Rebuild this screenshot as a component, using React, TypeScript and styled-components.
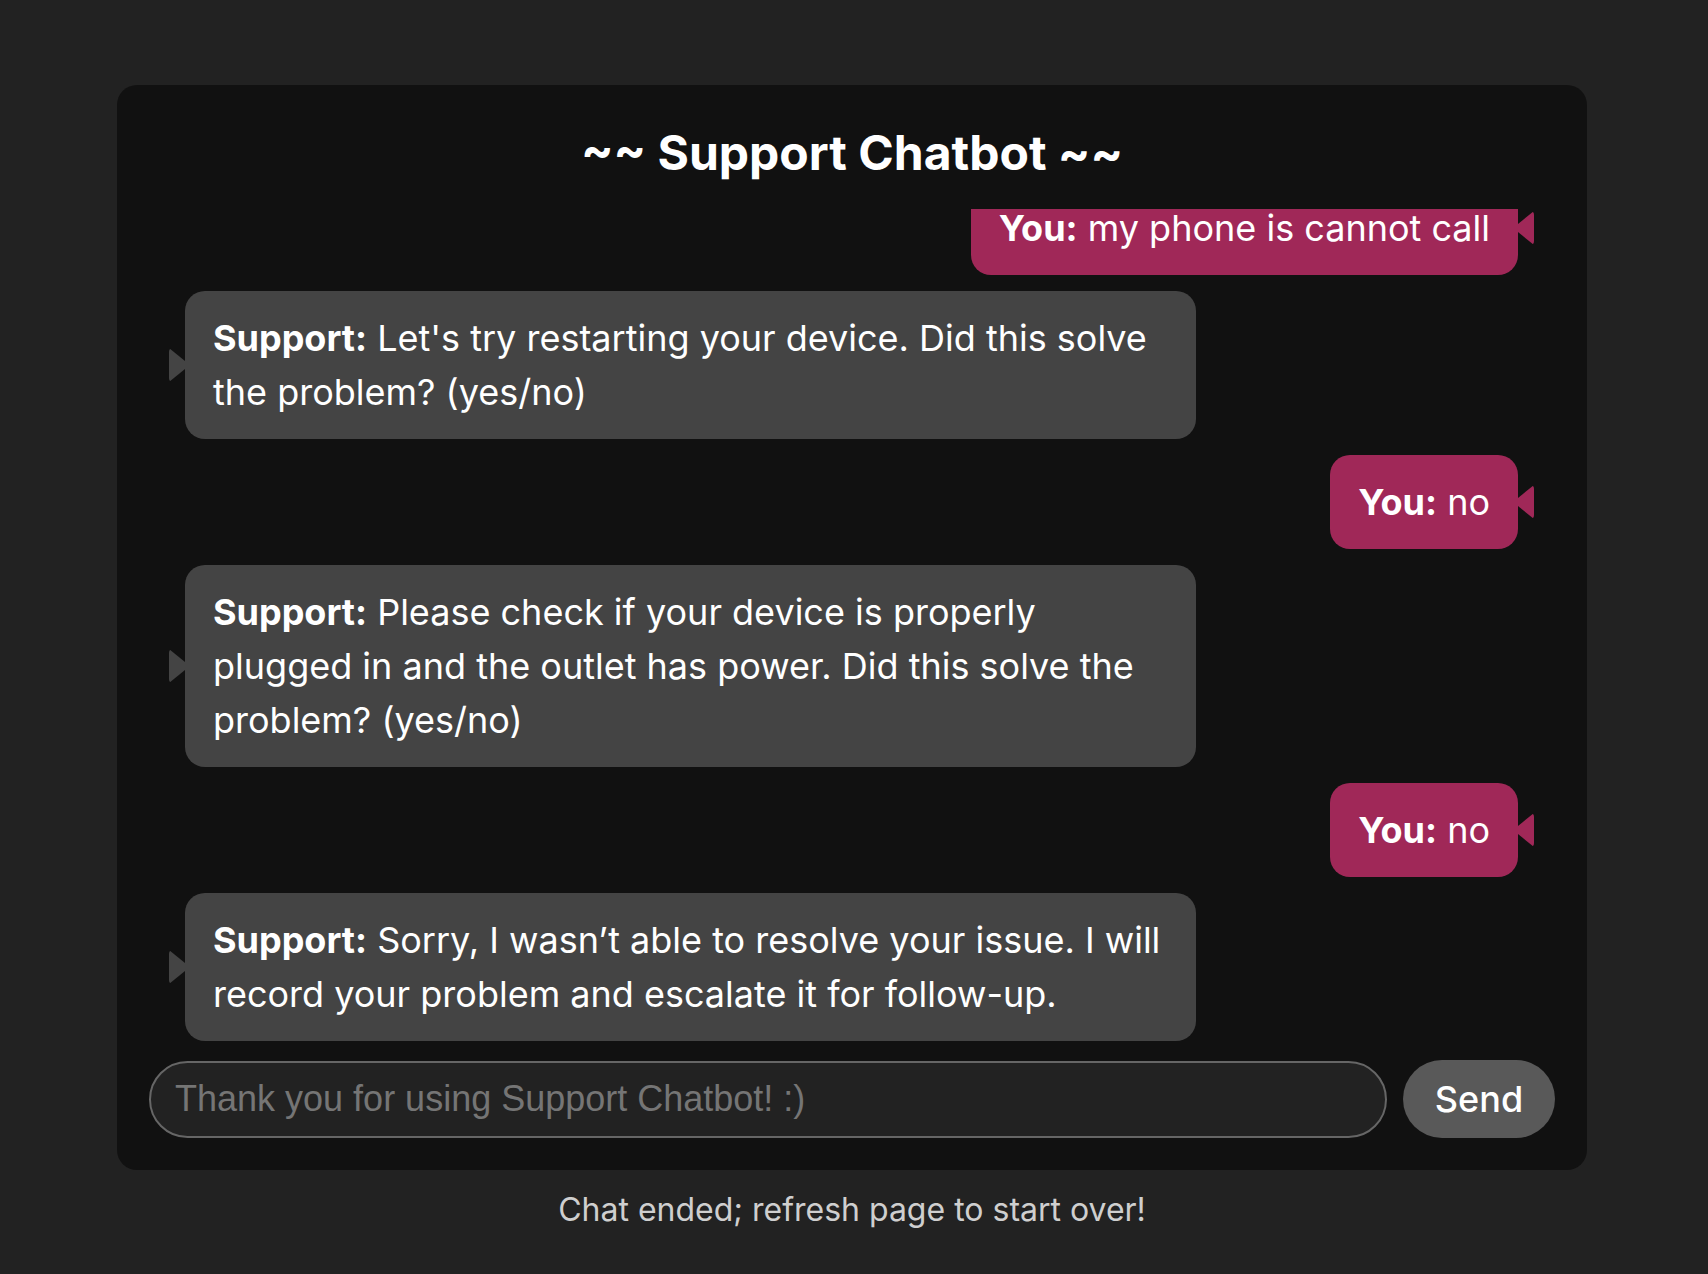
import React from 'react'
import styled, { createGlobalStyle, css } from 'styled-components'

const GlobalStyle = createGlobalStyle`
  html, body {
    margin: 0;
    padding: 0;
    background: #222222;
    font-family: Inter, "Noto Sans", sans-serif;
    color: #ffffff;
  }
  * {
    box-sizing: border-box;
  }
`

type Sender = 'you' | 'support'

type MessageType = {
  from: Sender
  text: string
}

const messages: MessageType[] = [
  { from: 'you', text: 'my phone is cannot call' },
  { from: 'support', text: "Let's try restarting your device. Did this solve the problem? (yes/no)" },
  { from: 'you', text: 'no' },
  { from: 'support', text: 'Please check if your device is properly plugged in and the outlet has power. Did this solve the problem? (yes/no)' },
  { from: 'you', text: 'no' },
  { from: 'support', text: 'Sorry, I wasn\u2019t able to resolve your issue. I will record your problem and escalate it for follow-up.' },
]

const Page = styled.main`
  display: flex;
  flex-direction: column;
  align-items: flex-start;
  padding: 85px 0 0 117px;
`

const ChatCard = styled.section`
  width: 1470px;
  height: 1085px;
  display: flex;
  flex-direction: column;
  padding: 39px 32px 32px;
  background: #111111;
  border-radius: 20px;
`

const Title = styled.h1`
  margin: 0 0 27px;
  font-size: 48px;
  line-height: 58px;
  font-weight: 700;
  text-align: center;
`

const MessageList = styled.div`
  flex: 1;
  min-height: 0;
  display: flex;
  flex-direction: column;
  justify-content: flex-end;
  gap: 16px;
  padding: 0 37px 0 36px;
  overflow: hidden;
`

const Bubble = styled.div<{ $from: Sender }>`
  position: relative;
  flex-shrink: 0;
  max-width: 1011px;
  padding: 20px 28px;
  border-radius: 20px;
  font-size: 36px;
  line-height: 54px;

  &::before {
    content: '';
    position: absolute;
    top: 50%;
    width: 16px;
    height: 34px;
    transform: translateY(-50%);
    background: inherit;
  }

  ${({ $from }) =>
    $from === 'you'
      ? css`
          align-self: flex-end;
          background: #a02858;
          &::before {
            right: -16px;
            border-radius: 0 4px 4px 0;
            clip-path: polygon(0 38%, 100% 0, 100% 100%, 0 62%);
          }
        `
      : css`
          align-self: flex-start;
          background: #444444;
          &::before {
            left: -16px;
            border-radius: 4px 0 0 4px;
            clip-path: polygon(0 0, 100% 38%, 100% 62%, 0 100%);
          }
        `}
`

const Sender = styled.strong`
  font-weight: 700;
`

const InputRow = styled.form`
  display: flex;
  align-items: center;
  gap: 16px;
  margin-top: 19px;
`

const TextInput = styled.input`
  flex: 1;
  height: 77px;
  padding: 0 24px;
  background: #222222;
  border: 2px solid #666666;
  border-radius: 40px;
  font-family: "Liberation Sans", Arial, sans-serif;
  font-size: 36px;
  color: #ffffff;
  outline: none;

  &::placeholder {
    color: #757575;
  }
`

const SendButton = styled.button`
  width: 152px;
  height: 78px;
  border: none;
  border-radius: 39px;
  background: #595959;
  color: #ffffff;
  font-family: Inter, "Noto Sans", sans-serif;
  font-size: 36px;
  font-weight: 500;
  cursor: pointer;
`

const Footer = styled.p`
  width: 1470px;
  margin: 16px 0 0;
  font-size: 32px;
  line-height: 48px;
  color: #cfcfcf;
  text-align: center;
`

const App = () => {
  return (
    <>
      <GlobalStyle />
      <Page>
        <ChatCard>
          <Title>~~ Support Chatbot ~~</Title>
          <MessageList>
            {messages.map((msg, i) => (
              <Bubble key={i} $from={msg.from}>
                <Sender>{msg.from === 'you' ? 'You:' : 'Support:'}</Sender> {msg.text}
              </Bubble>
            ))}
          </MessageList>
          <InputRow onSubmit={(e) => e.preventDefault()}>
            <TextInput placeholder="Thank you for using Support Chatbot! :)" disabled />
            <SendButton type="submit">Send</SendButton>
          </InputRow>
        </ChatCard>
        <Footer>Chat ended; refresh page to start over!</Footer>
      </Page>
    </>
  )
}

export default App
